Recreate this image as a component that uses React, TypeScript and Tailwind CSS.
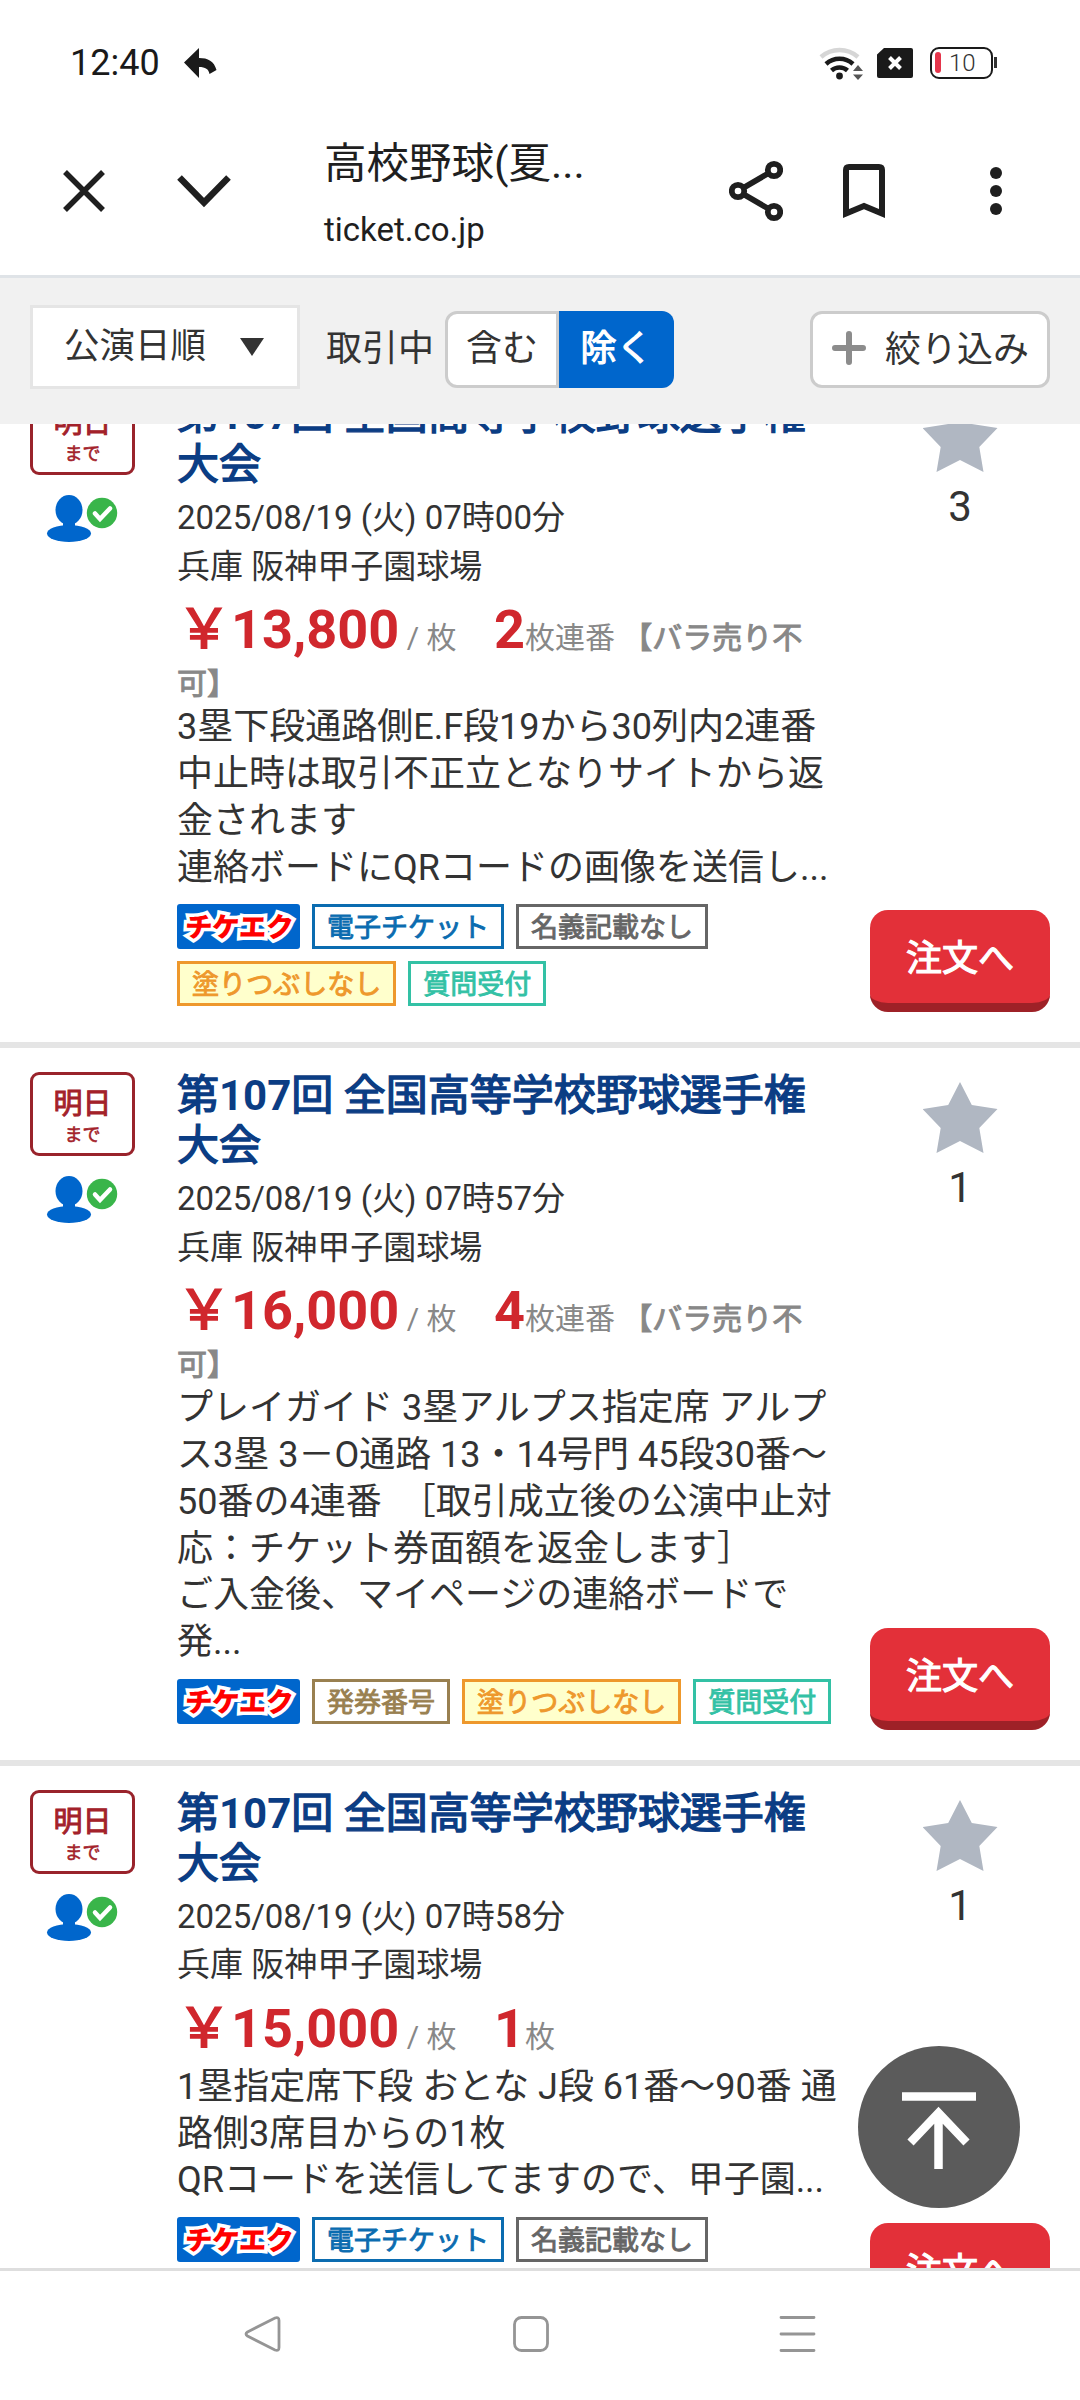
import { type ReactNode } from "react";
import clsx from "clsx";

type TagKind = "eticket" | "noname" | "number" | "fill" | "question";

type Ticket = {
    time: string;
    price: string;
    count: string;
    unit: string;
    bulkOnly: boolean;
    lines: string[];
    tags: TagKind[];
    watchers: number;
};

const TAGS: Record<TagKind, { label: string, style: string }> = {
    eticket: { label: "電子チケット", style: "border-[#0b6cb0] text-[#0b6cb0]" },
    noname: { label: "名義記載なし", style: "border-[#666666] text-[#666666]" },
    number: { label: "発券番号", style: "border-[#998050] text-[#998050]" },
    fill: { label: "塗りつぶしなし", style: "border-[#ee982c] bg-[#ffffcc] text-[#ee982c]" },
    question: { label: "質問受付", style: "border-[#33c1a5] text-[#33c1a5]" },
};

// thickened regular weight, used for all the emphasised Japanese text
const STRONG = "font-normal [-webkit-text-stroke:0.033em_currentColor]";

const tickets: Ticket[] = [
    {
        time: "07時00分",
        price: "13,800",
        count: "2",
        unit: "枚連番",
        bulkOnly: true,
        lines: [
            "3塁下段通路側E.F段19から30列内2連番",
            "中止時は取引不正立となりサイトから返",
            "金されます",
            "連絡ボードにQRコードの画像を送信し...",
        ],
        tags: ["eticket", "noname", "fill", "question"],
        watchers: 3,
    },
    {
        time: "07時57分",
        price: "16,000",
        count: "4",
        unit: "枚連番",
        bulkOnly: true,
        lines: [
            "プレイガイド 3塁アルプス指定席 アルプ",
            "ス3塁 3－O通路 13・14号門 45段30番～",
            "50番の4連番　［取引成立後の公演中止対",
            "応：チケット券面額を返金します］",
            "ご入金後、マイページの連絡ボードで",
            "発...",
        ],
        tags: ["number", "fill", "question"],
        watchers: 1,
    },
    {
        time: "07時58分",
        price: "15,000",
        count: "1",
        unit: "枚",
        bulkOnly: false,
        lines: [
            "1塁指定席下段 おとな J段 61番～90番 通",
            "路側3席目からの1枚",
            "QRコードを送信してますので、甲子園...",
        ],
        tags: ["eticket", "noname", "fill", "question"],
        watchers: 1,
    },
];

export default function App() {
    return (
        <div lang="ja" className="relative flex h-[2400px] w-[1080px] flex-col overflow-hidden bg-white font-['Roboto','Noto_Sans_CJK_JP',sans-serif] text-[#333333]">
            <StatusBar />
            <BrowserBar />
            <FilterBar />
            <main className="h-[1844px] overflow-hidden">
                <div className="-mt-[57px]">
                    {tickets.map((ticket) => (
                        <TicketCard key={ticket.time} ticket={ticket} />
                    ))}
                </div>
            </main>
            <NavBar />
            <ScrollTop />
        </div>
    )
}

function StatusBar() {
    return (
        <div className="flex h-[106px] shrink-0 items-center pt-[19px] pr-[83px] pl-[70px] text-[#1a1a1a]">
            <span className="text-[36px] leading-none">12:40</span>
            <svg className="ml-[24px] h-[30px] w-[33px]" viewBox="0 0 33 30" fill="currentColor">
                <path d="M0 14.5 15 0v10c9 0 15 3 17.500 12l-7 4c-1-5-4-7-10.500-7v11Z" />
            </svg>
            <div className="ml-auto flex items-center">
                <svg className="h-[36px] w-[46px]" viewBox="0 0 46 36" fill="none" strokeWidth="4.500">
                    <path d="M2 12a28 28 0 0 1 37 0" stroke="#d6d6d6" />
                    <path d="M7 19a20 20 0 0 1 27 0M12.500 25.500a12 12 0 0 1 16 0" stroke="currentColor" />
                    <circle cx="20.500" cy="31" r="3.400" fill="currentColor" />
                    <path d="M34 26 39 20 44 26ZM34 29.500 39 35 44 29.500Z" fill="#555555" />
                </svg>
                <svg className="ml-[12px] h-[30px] w-[36px]" viewBox="0 0 36 30">
                    <path d="M7 0h27q2 0 2 2v26q0 2-2 2H2q-2 0-2-2V6.500Z" fill="currentColor" />
                    <path d="m12.500 9.500 11 11m0-11-11 11" stroke="#fff" strokeWidth="4" />
                </svg>
                <div className="ml-[17px] flex h-[32px] w-[63px] items-center rounded-[9px] border-[2.500px] border-current pl-[3px]">
                    <span className="h-[21px] w-[6px] rounded-full bg-[#e5354b]" />
                    <span className="ml-[8px] text-[24px] leading-none font-light text-[#333333]">10</span>
                </div>
                <span className="ml-px h-[11px] w-[3px] bg-[#333333]" />
            </div>
        </div>
    )
}

function BrowserBar() {
    return (
        <header className="flex h-[172px] shrink-0 border-b-[3px] border-[#dfe3e7] text-[#1f1f1f]">
            <svg className="mt-[64px] ml-[63px] h-[42px] w-[42px]" viewBox="0 0 42 42" fill="none" stroke="currentColor" strokeWidth="5.500">
                <path d="m2 2 38 38M40 2 2 40" />
            </svg>
            <svg className="mt-[69px] ml-[72px] h-[33px] w-[54px]" viewBox="0 0 54 33" fill="none" stroke="currentColor" strokeWidth="6.500">
                <path d="m2.500 2.500 24.500 25 24.500-25" />
            </svg>
            <div className="ml-[93px] w-[270px]">
                <h1 className="mt-[26px] text-[42.500px] leading-[64px] whitespace-nowrap">高校野球(夏...</h1>
                <p className="mt-[12px] text-[33px] leading-[44px]">ticket.co.jp</p>
            </div>
            <svg className="mt-[54px] ml-[135px] h-[62px] w-[54px]" viewBox="0 0 54 62" fill="none" stroke="currentColor" strokeWidth="5.800">
                <path d="M45 10 9 31l36 21" />
                <g fill="#fff">
                    <circle cx="45" cy="10" r="6.200" />
                    <circle cx="9" cy="31" r="6.200" />
                    <circle cx="45" cy="52" r="6.200" />
                </g>
            </svg>
            <svg className="mt-[58px] ml-[60px] h-[54px] w-[42px]" viewBox="0 0 42 54" fill="none" stroke="currentColor" strokeWidth="6">
                <path d="M3 49.500V6q0-3 3-3h30q3 0 3 3v43.500L21 42Z" />
            </svg>
            <svg className="mt-[61px] ml-[105px] h-[48px] w-[12px]" viewBox="0 0 12 48" fill="currentColor">
                <circle cx="6" cy="6" r="6" />
                <circle cx="6" cy="24" r="6" />
                <circle cx="6" cy="42" r="6" />
            </svg>
        </header>
    )
}

function FilterBar() {
    return (
        <div className="flex h-[146px] shrink-0 items-start bg-[#f1f1f1] px-[30px] text-[36px]">
            <div className="mt-[27px] flex h-[84px] w-[270px] items-center border-[3px] border-[#e5e5e5] bg-white pl-[31px]">
                <span className="text-[35.500px] leading-none">公演日順</span>
                <svg className="ml-[34px] h-[18px] w-[24px]" viewBox="0 0 24 18" fill="currentColor">
                    <path d="M0 0h24L12 18Z" />
                </svg>
            </div>
            <span className="mt-[33px] ml-[26px] w-[119px] leading-[76px]">取引中</span>
            <div className="mt-[33px] flex h-[77px]">
                <div className="w-[114px] rounded-l-[12px] border-[3px] border-[#cccccc] bg-white text-center leading-[70px]">含む</div>
                <div className={clsx("w-[115px] rounded-r-[12px] bg-[#0066cc] text-center leading-[76px] text-white", STRONG)}>除く</div>
            </div>
            <div className="mt-[33px] ml-auto flex h-[77px] w-[240px] items-center rounded-[12px] border-[3px] border-[#cccccc] bg-white pl-[19px]">
                <svg className="-mt-[3px] h-[34px] w-[34px]" viewBox="0 0 34 34" stroke="#8c8c8c" strokeWidth="6" strokeLinecap="round">
                    <path d="M17 3v28M3 17h28" />
                </svg>
                <span className="ml-[19px] leading-[68px] whitespace-nowrap">絞り込み</span>
            </div>
        </div>
    )
}

function TicketCard({ ticket } : { ticket: Ticket }) {
    return (
        <article className="flex border-b-[6px] border-[#e5e5e5] pr-[30px] pl-[30px]">
            <div className="flex w-[105px] flex-col items-center pt-[24px]">
                <div className="flex h-[84px] w-full flex-col items-center rounded-[9px] border-[3px] border-[#99232b] pt-[15px] text-[#a3212a]">
                    <span className={clsx("text-[29px] leading-[29px]", STRONG)}>明日</span>
                    <span className={clsx("mt-[6px] text-[18px] leading-[20px]", STRONG)}>まで</span>
                </div>
                <UserIcon />
            </div>
            <div className="ml-[42px] w-[670px] pt-[23px] pb-[36px]">
                <h2 className={clsx("text-[42px] leading-[50px] text-[#0b3d84]", STRONG)}>
                    第<b className="[-webkit-text-stroke:0]">107</b>回 全国高等学校野球選手権<br />大会
                </h2>
                <p className="mt-[4px] text-[33px] leading-[48.600px]">
                    2025/08/19 (火) {ticket.time}<br />兵庫 阪神甲子園球場
                </p>
                <div className="text-[30px] leading-[40px] text-[#888888]">
                    <div className="flex h-[74px] items-baseline whitespace-pre">
                        <span className={clsx("text-[54px] leading-[78px] text-[#d0272d]", STRONG)}>￥</span>
                        <b className="text-[54px] leading-[78px] text-[#d0272d]">{ticket.price}</b>
                        <span> / 枚　 </span>
                        <b className="text-[54px] leading-[78px] text-[#d0272d]">{ticket.count}</b>
                        <span>{ticket.unit}</span>
                        {ticket.bulkOnly && <span className={STRONG}> 【バラ売り不</span>}
                    </div>
                    {ticket.bulkOnly && <span className={clsx("block h-[39px] leading-[38px]", STRONG)}>可】</span>}
                </div>
                <p className="text-[36px] leading-[46.800px] whitespace-nowrap">
                    {ticket.lines.map((line) => (
                        <span key={line} className="block">{line}</span>
                    ))}
                </p>
                <div className="mt-[12.600px] flex flex-wrap gap-[12px]">
                    <Logo />
                    {ticket.tags.map((kind) => (
                        <Tag key={kind} className={TAGS[kind].style}>{TAGS[kind].label}</Tag>
                    ))}
                </div>
            </div>
            <div className="ml-auto flex w-[180px] flex-col items-center pt-[34px] pb-[30px]">
                <svg className="h-[71px] w-[75px]" viewBox="0 0 75 71" fill="#b0b7c2">
                    <path d="M37 0 48.800 23 74.500 27 56.300 46 60.500 71 37 59 13.500 71 17.700 46-.5 27 25.200 23Z" />
                </svg>
                <span className="mt-[14px] text-[42px] leading-[42px]">{ticket.watchers}</span>
                <button className={clsx("mt-auto h-[102px] w-full rounded-[18px] border-b-[9px] border-[#9e2127] bg-[#e33039] pt-[6px] text-[36px] text-white", STRONG)}>注文へ</button>
            </div>
        </article>
    )
}

function Tag({ className, children } : { className: string, children: ReactNode }) {
    return (
        <span className={clsx("h-[45px] border-[3px] px-[12px] text-[27px] leading-[42px] whitespace-nowrap", STRONG, className)}>
            {children}
        </span>
    )
}

function Logo() {
    return (
        <span className="flex h-[45px] w-[123px] items-center justify-center rounded-[3px] bg-[#0066cc] pt-[3px]">
            <span className="-skew-x-3 text-[27.500px] leading-none font-black tracking-[-0.500px] text-[#ff0000] [-webkit-text-stroke:7px_#fff] [paint-order:stroke_fill] [stroke-linejoin:round]">チケエク</span>
        </span>
    )
}

function UserIcon() {
    return (
        <svg className="mt-[19px] mr-px h-[50px] w-[72px]" viewBox="0 0 72 50">
            <ellipse cx="23" cy="16" rx="13.500" ry="15" fill="#0066cc" />
            <path d="M17 26h12v8H17Z" fill="#0066cc" />
            <ellipse cx="23" cy="39.500" rx="22" ry="8.500" fill="#0066cc" />
            <circle cx="56" cy="19" r="15.200" fill="#39b54a" />
            <path d="m49 19.500 5 5.500 10-10.500" fill="none" stroke="#fff" strokeWidth="4.500" strokeLinecap="round" />
        </svg>
    )
}

function ScrollTop() {
    return (
        <button className="absolute top-[2046px] left-[858px] h-[162px] w-[162px] rounded-full bg-[#5b5b5b]">
            <svg className="h-full w-full" viewBox="0 0 162 162" fill="none" stroke="#fff" strokeWidth="8.500">
                <path d="M44 50.500h74M80.500 123V66M52.500 96.500l28-29.500 28 29.500" />
            </svg>
        </button>
    )
}

function NavBar() {
    return (
        <nav className="flex h-[132px] shrink-0 items-center border-t-[3px] border-[#dedede] pb-[4px] pl-[244px]">
            <svg className="h-[38px] w-[572px]" viewBox="0 0 572 38" fill="none" stroke="#959595" strokeWidth="2.800" strokeLinecap="round">
                <path d="M3.500 17 31 3q4-1.500 4 2.500v27q0 4-4 2.500L3.500 21q-3-2 0-4Z" />
                <rect x="270.500" y="2.500" width="33" height="33" rx="7" />
                <path d="M537 2.500h33M537 19h33M537 35.500h33" />
            </svg>
        </nav>
    )
}
